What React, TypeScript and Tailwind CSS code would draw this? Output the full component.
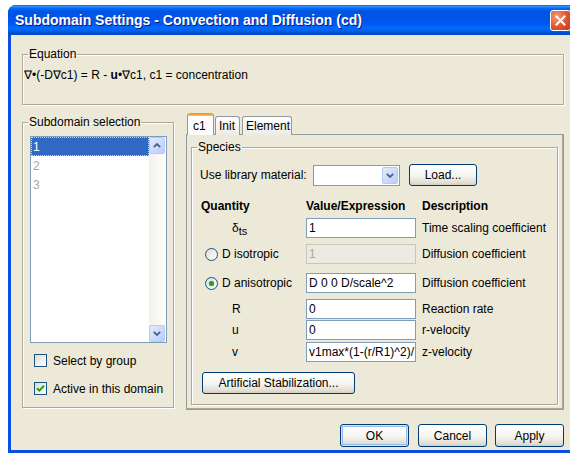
import type { ReactNode } from "react";

const sans = "font-['Liberation_Sans',Arial,sans-serif]";

function GroupBox({ title, className, children }: { title: string; className?: string; children?: ReactNode }) {
  return (
    <fieldset
      className={`border border-[#ACA899] shadow-[1px_1px_0_#fff,inset_1px_1px_0_#fff] ${className ?? ""}`}
    >
      <legend className="ml-[5px] px-[1px] text-[12px] leading-[14px] text-black">{title}</legend>
      {children}
    </fieldset>
  );
}

function XpButton({ children, className, isDefault }: { children: ReactNode; className?: string; isDefault?: boolean }) {
  return (
    <button
      className={`flex items-center justify-center rounded-[3px] border border-[#003C74] bg-[linear-gradient(180deg,#FFFFFF_0%,#F4F4F0_55%,#E3E0D7_85%,#D6D0C5_100%)] text-[12px] text-black ${
        isDefault ? "shadow-[inset_0_0_0_1px_#CEE7FF,inset_0_0_0_2px_#98B8EA]" : "shadow-[inset_0_-1px_0_#D6D0C5]"
      } ${className ?? ""}`}
    >
      {children}
    </button>
  );
}

function TextField({ value, disabled, className }: { value: string; disabled?: boolean; className?: string }) {
  return (
    <div
      className={`flex h-[20px] w-[110px] items-center overflow-hidden whitespace-nowrap border pl-[2px] text-[12px] ${
        disabled ? "border-[#C9C7BA] bg-[#EBEBE4] text-[#ACA899]" : "border-[#7F9DB9] bg-white text-black"
      } ${className ?? ""}`}
    >
      {value}
    </div>
  );
}

function Radio({ checked }: { checked?: boolean }) {
  return (
    <span className="flex h-[13px] w-[13px] items-center justify-center rounded-full border border-[#1C5180] bg-[linear-gradient(135deg,#DCDCD7,#FFFFFF)]">
      {checked && <span className="h-[5px] w-[5px] rounded-full bg-[#21A121] shadow-[0_0_1px_#5EC65E]" />}
    </span>
  );
}

function CheckBox({ checked }: { checked?: boolean }) {
  return (
    <span className="flex h-[13px] w-[13px] items-center justify-center border border-[#1C5180] bg-[linear-gradient(135deg,#DCDCD7,#FFFFFF)]">
      {checked && (
        <svg width="9" height="9" viewBox="0 0 9 9">
          <path d="M1 4.2 L3.4 6.6 L8 1.8" fill="none" stroke="#21A121" strokeWidth="2" />
        </svg>
      )}
    </span>
  );
}

function Chevron({ up, className }: { up?: boolean; className?: string }) {
  return (
    <svg width="8" height="5" viewBox="0 0 8 5" className={className}>
      <path d={up ? "M0.8 4.2 L4 1 L7.2 4.2" : "M0.8 0.8 L4 4 L7.2 0.8"} fill="none" stroke="#4D6185" strokeWidth="1.8" />
    </svg>
  );
}

function ScrollArrow({ up }: { up?: boolean }) {
  return (
    <div className="flex h-[17px] w-[16px] items-center justify-center rounded-[2px] border border-[#B6CAF9] bg-[linear-gradient(135deg,#E2EBFE,#B9CDFB)]">
      <Chevron up={up} />
    </div>
  );
}

function Row({ label, value, desc, disabled, className }: { label: ReactNode; value: string; desc: string; disabled?: boolean; className?: string }) {
  return (
    <div className={`flex h-[20px] items-center ${className ?? ""}`}>
      <div className="flex w-[106px] items-center">{label}</div>
      <TextField value={value} disabled={disabled} />
      <span className="ml-[6px] whitespace-nowrap">{desc}</span>
    </div>
  );
}

export default function App() {
  const rows = [
    {
      label: (
        <span className="pl-[32px]">
          δ<sub className="text-[11px]">ts</sub>
        </span>
      ),
      value: "1",
      desc: "Time scaling coefficient",
      mt: "mt-[5px]",
    },
    {
      label: (
        <span className="flex items-center gap-[4px] pl-[5px]">
          <Radio />D isotropic
        </span>
      ),
      value: "1",
      desc: "Diffusion coefficient",
      disabled: true,
      mt: "mt-[6px]",
    },
    {
      label: (
        <span className="flex items-center gap-[4px] pl-[5px]">
          <Radio checked />D anisotropic
        </span>
      ),
      value: "D 0 0 D/scale^2",
      desc: "Diffusion coefficient",
      mt: "mt-[9px]",
    },
    { label: <span className="pl-[32px]">R</span>, value: "0", desc: "Reaction rate", mt: "mt-[6px]" },
    { label: <span className="pl-[32px]">u</span>, value: "0", desc: "r-velocity", mt: "mt-[1px]" },
    { label: <span className="pl-[32px]">v</span>, value: "v1max*(1-(r/R1)^2)/", desc: "z-velocity", mt: "mt-[2px]" },
  ];

  return (
    <div className={`h-[457px] w-[570px] overflow-hidden bg-white pl-[8px] pt-[5px] text-[12px] text-black ${sans}`}>
      <div className="flex h-[448px] w-[570px] flex-col overflow-hidden rounded-t-[8px] bg-[#0A4EE4]">
        {/* title bar */}
        <div className="flex h-[30px] shrink-0 items-center bg-[linear-gradient(180deg,#0058EE_0%,#3593FF_4%,#288EFF_6%,#127DFF_8%,#036FFC_10%,#0262EE_14%,#0057E5_20%,#0054E3_24%,#0055EB_56%,#005BF5_66%,#026AFE_76%,#0062EF_86%,#0052D6_92%,#0046C8_100%)] pl-[7px] pr-[7px]">
          <span className="flex-1 text-[14px] font-bold text-white [text-shadow:1px_1px_0_#0A1883]">
            Subdomain Settings - Convection and Diffusion (cd)
          </span>
          <div className="flex h-[21px] w-[21px] items-center justify-center rounded-[3px] border border-white bg-[radial-gradient(circle_at_30%_30%,#F09A7E,#E0542F_55%,#C43A14)]">
            <svg width="11" height="11" viewBox="0 0 11 11">
              <path d="M1.5 1.5 L9.5 9.5 M9.5 1.5 L1.5 9.5" stroke="#fff" strokeWidth="2" strokeLinecap="square" />
            </svg>
          </div>
        </div>

        {/* dialog body */}
        <div className="mx-[3px] mb-[3px] flex flex-1 flex-col bg-[#ECE9D8] px-[11px] pt-[12px]">
          <GroupBox title="Equation" className="h-[58px]">
            <div className="ml-[1px] mt-[7px] leading-[14px]">
              ∇•(-D∇c1) = R - <b>u</b>•∇c1, c1 = concentration
            </div>
          </GroupBox>

          <div className="mt-[8px] flex">
            <GroupBox title="Subdomain selection" className="mt-[2px] h-[293px] w-[152px] shrink-0">
              <div className="ml-[7px] mt-[7px] flex h-[207px] w-[137px] border border-[#7F9DB9] bg-white">
                <div className="flex flex-1 flex-col">
                  <div className="flex h-[19px] items-center border border-dotted border-[#C7D4F0] bg-[#316AC5] pl-[1px] text-white">1</div>
                  <div className="flex h-[19px] items-center pl-[2px] text-[#ACA899]">2</div>
                  <div className="flex h-[19px] items-center pl-[2px] text-[#ACA899]">3</div>
                </div>
                <div className="flex w-[17px] flex-col justify-between bg-[linear-gradient(90deg,#F3F1EC,#FEFEFB)]">
                  <ScrollArrow up />
                  <ScrollArrow />
                </div>
              </div>
              <label className="ml-[11px] mt-[11px] flex h-[13px] items-center gap-[6px]">
                <CheckBox />
                Select by group
              </label>
              <label className="ml-[11px] mt-[15px] flex h-[13px] items-center gap-[6px]">
                <CheckBox checked />
                Active in this domain
              </label>
            </GroupBox>

            {/* tabs */}
            <div className="ml-[12px] flex flex-1 flex-col">
              <div className="relative z-10 -mb-px flex h-[22px] items-end">
                <div className="ml-[1px] flex h-[22px] w-[27px] flex-col overflow-hidden rounded-t-[3px] border-x border-[#919B9C] bg-[#FCFCFE]">
                  <div className="h-[3px] shrink-0 bg-[linear-gradient(180deg,#E68B2C,#FFC83C)]" />
                  <div className="flex flex-1 items-center pl-[5px]">c1</div>
                </div>
                <div className="ml-[1px] flex h-[19px] w-[25px] items-center rounded-t-[3px] border border-b-0 border-[#919B9C] bg-[linear-gradient(180deg,#FFFFFF,#ECEBE6)] pl-[3px]">
                  Init
                </div>
                <div className="ml-[2px] flex h-[19px] w-[50px] items-center rounded-t-[3px] border border-b-0 border-[#919B9C] bg-[linear-gradient(180deg,#FFFFFF,#ECEBE6)] pl-[3px]">
                  Element
                </div>
              </div>
              <div className="h-[276px] border border-[#919B9C] bg-[#ECE9D8] pl-[4px] pr-[5px] pt-[5px] shadow-[inset_-1px_-1px_0_#ACA899]">
                <GroupBox title="Species" className="h-[265px]">
                  <div className="ml-[8px] mt-[10px] flex items-center">
                    <span className="w-[113px]">Use library material:</span>
                    <div className="flex h-[21px] w-[87px] items-center justify-end border border-[#7F9DB9] bg-white pr-[1px]">
                      <div className="flex h-[17px] w-[16px] items-center justify-center rounded-[2px] border border-[#B6CAF9] bg-[linear-gradient(135deg,#E2EBFE,#B9CDFB)]">
                        <Chevron />
                      </div>
                    </div>
                    <XpButton className="ml-[9px] h-[22px] w-[68px]">Load...</XpButton>
                  </div>

                  <div className="ml-[8px] mt-[13px] flex h-[14px] items-center font-bold">
                    <span className="w-[106px] pl-[1px]">Quantity</span>
                    <span className="w-[116px]">Value/Expression</span>
                    <span>Description</span>
                  </div>

                  <div className="ml-[8px]">
                    {rows.map((r, i) => (
                      <Row key={i} label={r.label} value={r.value} desc={r.desc} disabled={r.disabled} className={r.mt} />
                    ))}
                  </div>

                  <XpButton className="ml-[10px] mt-[10px] h-[22px] w-[153px]">Artificial Stabilization...</XpButton>
                </GroupBox>
              </div>
            </div>
          </div>

          <div className="mt-[14px] flex justify-end gap-[8px]">
            <XpButton isDefault className="mr-[1px] h-[23px] w-[69px]">OK</XpButton>
            <XpButton className="h-[23px] w-[69px]">Cancel</XpButton>
            <XpButton className="h-[23px] w-[69px]">Apply</XpButton>
          </div>
        </div>
      </div>
    </div>
  );
}
